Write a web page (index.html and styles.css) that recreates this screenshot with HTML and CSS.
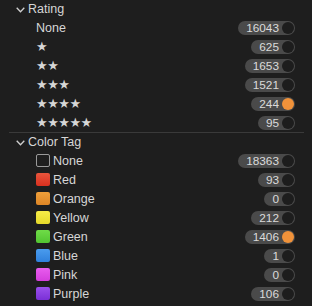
FILE: index.html
```html
<!DOCTYPE html>
<html>
    <head>
        <meta charset="utf8">
        <title>Filters</title>
        <link rel="stylesheet" href="styles.css">
    </head>
    <body>
        <div class="panel">
            <div class="group_head">
                <svg class="chevron" width="9" height="6" viewBox="0 0 9 6"><polyline points="0.7,0.7 4.5,4.8 8.3,0.7" fill="none" stroke="#cfcfcf" stroke-width="1.3"/></svg>
                <span>Rating</span>
            </div>
            <div class="row"><span class="label">None</span><span class="pill">16043<i class="dot"></i></span></div>
            <div class="row"><span class="label stars">★</span><span class="pill">625<i class="dot"></i></span></div>
            <div class="row"><span class="label stars">★★</span><span class="pill">1653<i class="dot"></i></span></div>
            <div class="row"><span class="label stars">★★★</span><span class="pill">1521<i class="dot"></i></span></div>
            <div class="row"><span class="label stars">★★★★</span><span class="pill">244<i class="dot on"></i></span></div>
            <div class="row"><span class="label stars">★★★★★</span><span class="pill">95<i class="dot"></i></span></div>
            <hr class="sep">
            <div class="group_head">
                <svg class="chevron" width="9" height="6" viewBox="0 0 9 6"><polyline points="0.7,0.7 4.5,4.8 8.3,0.7" fill="none" stroke="#cfcfcf" stroke-width="1.3"/></svg>
                <span>Color Tag</span>
            </div>
            <div class="row"><span class="label"><i class="swatch none"></i>None</span><span class="pill">18363<i class="dot"></i></span></div>
            <div class="row"><span class="label"><i class="swatch red"></i>Red</span><span class="pill">93<i class="dot"></i></span></div>
            <div class="row"><span class="label"><i class="swatch orange"></i>Orange</span><span class="pill">0<i class="dot"></i></span></div>
            <div class="row"><span class="label"><i class="swatch yellow"></i>Yellow</span><span class="pill">212<i class="dot"></i></span></div>
            <div class="row"><span class="label"><i class="swatch green"></i>Green</span><span class="pill">1406<i class="dot on"></i></span></div>
            <div class="row"><span class="label"><i class="swatch blue"></i>Blue</span><span class="pill">1<i class="dot"></i></span></div>
            <div class="row"><span class="label"><i class="swatch pink"></i>Pink</span><span class="pill">0<i class="dot"></i></span></div>
            <div class="row"><span class="label"><i class="swatch purple"></i>Purple</span><span class="pill">106<i class="dot"></i></span></div>
        </div>
    </body>
</html>
```

FILE: styles.css
```css
html, body{
    margin:0;
    background:#1e1e1e;
}
.panel{
    width:312px;
    font-family:"Liberation Sans", Arial, sans-serif;
    font-size:12px;
    color:#d6d6d6;
}
.group_head{
    height:18px;
    display:flex;
    align-items:center;
    padding-left:16px;
    gap:3px;
    font-size:12.5px;
}
.chevron{
    display:block;
    margin-top:1px;
}
.row{
    height:19px;
    display:flex;
    align-items:center;
    justify-content:space-between;
    padding:0 17px 0 36px;
}
.label{
    display:flex;
    align-items:center;
    gap:3px;
    font-size:12.5px;
}
.stars{
    font-family:"DejaVu Sans", sans-serif;
    font-size:13px;
    letter-spacing:-0.5px;
    margin-left:0;
}
.pill{
    display:flex;
    align-items:center;
    height:14px;
    padding:0 1px 0 8px;
    border-radius:7px;
    background:#4a4a4a;
    color:#dadada;
    font-size:11.8px;
    gap:3px;
}
.dot{
    width:12px;
    height:12px;
    border-radius:50%;
    background:#1d1d1d;
}
.dot.on{
    background:#f0923a;
}
.sep{
    border:0;
    border-top:1px solid #3a3a3a;
    margin:0 8px 0 9px;
    height:0;
}
.swatch{
    width:14px;
    height:13px;
    border-radius:2px;
    box-sizing:border-box;
}
.swatch.none{
    border:1px solid #9a9a9a;
}
.red{ background:linear-gradient(#e8553c, #d9301f); }
.orange{ background:linear-gradient(#ef9f3a, #de8626); }
.yellow{ background:linear-gradient(#f6ec48, #e6d92a); }
.green{ background:linear-gradient(#6fdc48, #52c431); }
.blue{ background:linear-gradient(#4a9cee, #2f80dc); }
.pink{ background:linear-gradient(#e85cee, #d43edc); }
.purple{ background:linear-gradient(#9a50ec, #7a30d6); }
```
